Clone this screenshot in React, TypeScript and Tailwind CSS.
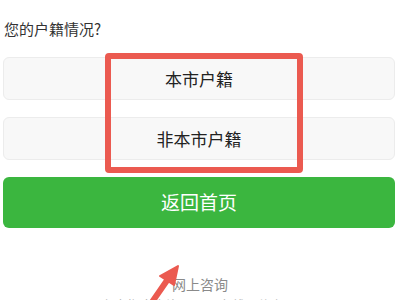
export default function App() {
  const options = ['本市户籍', '非本市户籍'];

  return (
    <div
      className="relative w-[400px] h-[300px] overflow-hidden bg-white"
      style={{ fontFamily: '"Noto Sans CJK SC", "Noto Sans", sans-serif' }}
    >
      <div className="px-[3px] pt-[20px] pr-[5px]">
        <p className="pl-[1px] text-[15px] leading-[18px] text-[#333]">您的户籍情况?</p>

        <div className="mt-[19px] flex flex-col gap-[17px]">
          {options.map((o) => (
            <div
              key={o}
              className="h-[43px] flex items-center justify-center rounded-[6px] border border-[#ececec] bg-[#f8f8f8] text-[17px] text-[#222]"
            >
              {o}
            </div>
          ))}
        </div>

        <button className="mt-[17px] w-full h-[51px] rounded-[6px] bg-[#3bb63f] text-white text-[19px] flex items-center justify-center">
          返回首页
        </button>

        <p className="mt-[46px] text-center text-[14px] leading-[20px] text-[#8a8a8a] pl-[2px]">网上咨询</p>
        <div className="mt-[3px] flex justify-center gap-[40px] text-[13px] leading-[16px] text-[#b5b5b5]">
          <span>办事指南查询</span>
          <span>在线预约办理</span>
        </div>
      </div>

      {/* red highlight box */}
      <div className="absolute left-[105px] top-[53px] w-[198px] h-[120px] border-[6px] border-[#eb5a50] rounded-[4px]" />

      {/* red arrow */}
      <svg className="absolute left-0 top-0" width="400" height="300" viewBox="0 0 400 300">
        <path d="M150 305 L168 279" stroke="#eb5a50" strokeWidth="6" strokeLinecap="round" />
        <path d="M178 266 L160 276 L174 285 Z" fill="#eb5a50" stroke="#eb5a50" strokeWidth="2" strokeLinejoin="round" />
      </svg>
    </div>
  );
}
